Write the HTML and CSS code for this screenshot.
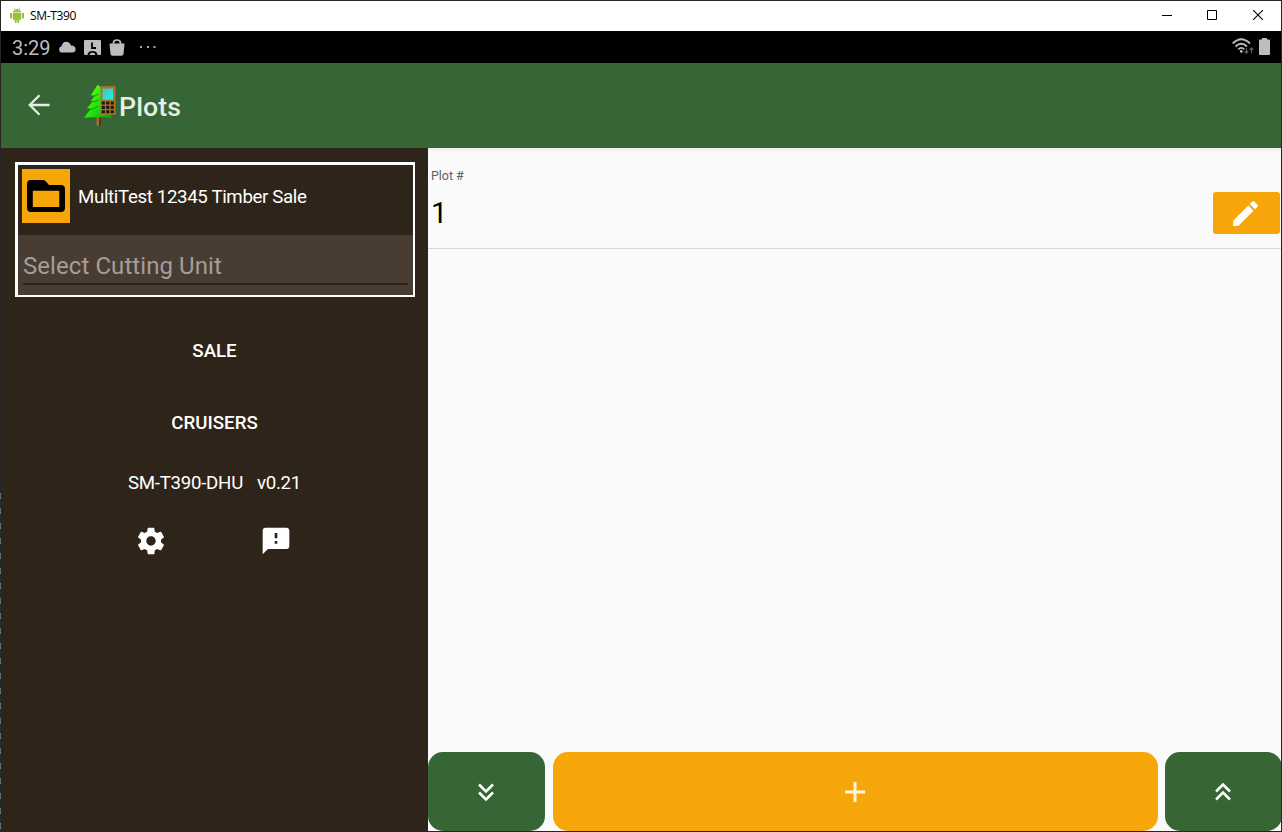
FILE: index.html
```html
<!DOCTYPE html>
<html lang="en">
<head>
<meta charset="utf-8">
<title>SM-T390</title>
<link rel="stylesheet" href="styles.css">
</head>
<body>
<div class="window">
  <header class="titlebar">
    <svg class="android" width="14" height="16" viewBox="0 0 14 16" fill="#97c03d"><path d="M3 5.2C3 1 11 1 11 5.2z"/><path d="M4 .5 5 2.3M10 .5 9 2.3" stroke="#97c03d" stroke-width=".7"/><path d="M3 5.8h8v6.4q0 .8-.8.8H9.300v2q0 1-1 1t-1-1v-2h-.6v2q0 1-1 1t-1-1v-2H3.800q-.8 0-.8-.8z"/><rect y="5.700" width="2.300" height="6" rx="1.100"/><rect x="11.700" y="5.700" width="2.300" height="6" rx="1.100"/><circle cx="5.300" cy="3.700" r=".45" fill="#fff"/><circle cx="8.700" cy="3.700" r=".45" fill="#fff"/></svg>
    <span class="title">SM-T390</span>
    <div class="controls">
      <svg width="10" height="10" viewBox="0 0 10 10"><path d="M0 5.500h10" stroke="#000"/></svg>
      <svg width="10" height="10" viewBox="0 0 10 10"><path d="M.5.500h9v9h-9z" fill="none" stroke="#000"/></svg>
      <svg width="10" height="10" viewBox="0 0 10 10"><path d="M0 0l10 10M10 0L0 10" stroke="#000" stroke-width="1.100"/></svg>
    </div>
  </header>
  <div class="status">
    <span class="clock">3:29</span>
    <svg class="cloud" width="18" height="12" viewBox="0 0 18 12"><path d="M3.500 11.500a3.200 3.200 0 0 1 0-6.200Q4.500 1 8 .8q3.500-.2 5 3.600 4.500.3 4.600 3.800-.1 3.300-3.600 3.300z" fill="#bdbdbd"/></svg>
    <svg class="badge" width="17" height="15" viewBox="0 0 17 15"><path d="M1 0h15q1 0 1 1v13q0 1-1 1h-2.500q-.3-4-5-4t-5 4H1q-1 0-1-1V1q0-1 1-1z" fill="#bdbdbd"/><path d="M8 2.500v5.500h4" fill="none" stroke="#000" stroke-width="1.800"/><path d="M5.500 15q.5-2.500 3-2.500t3 2.500z" fill="#bdbdbd"/></svg>
    <svg class="bag" width="16" height="17" viewBox="0 0 16 17"><path d="M.5 4.500h15L14.500 15q-.2 1.700-2 1.700h-9q-1.800 0-2-1.700z" fill="#bdbdbd"/><path d="M4.500 5V4q0-3 3.500-3t3.500 3v1" fill="none" stroke="#bdbdbd" stroke-width="1.700"/></svg>
    <svg class="dots" width="16" height="2" viewBox="0 0 16 2" fill="#a8a8a8"><path d="M0 0h2v2H0zM7 0h2v2H7zM13.500 0h2v2h-2z"/></svg>
    <svg class="wifi" width="22" height="17" viewBox="0 0 22 17"><g fill="none" stroke="#bdbdbd" stroke-width="1.800"><path d="M.7 5.500Q9.300-3 18 5.500M3.500 8.500Q9.300 3 15 8.500M6.300 11.300Q9.300 8.500 12.300 11.300"/></g><circle cx="9.300" cy="13.400" r="1.400" fill="#bdbdbd"/><path d="M14.500 10v5m-1.800-1.800 1.800 2 1.800-2M19.500 15v-5m-1.800 1.800 1.800-2 1.800 2" fill="none" stroke="#666" stroke-width="1.100"/></svg>
    <svg class="battery" width="11" height="17" viewBox="0 0 11 17"><path d="M3 0h5v1.500h2q1 0 1 1V16q0 1-1 1H1q-1 0-1-1V2.500q0-1 1-1h2z" fill="#bdbdbd"/></svg>
  </div>
  <div class="appbar">
    <svg class="back" width="22" height="22" viewBox="0 0 22 22"><path d="M21.500 11H2M11.500 1.200 1.700 11l9.800 9.800" fill="none" stroke="#e6eee6" stroke-width="2.300"/></svg>
    <svg class="logo" width="32" height="44" viewBox="0 0 33 44"><defs><linearGradient id="tree" x1="0" y1="0" x2="1" y2="1"><stop offset="0" stop-color="#75fb28"/><stop offset=".55" stop-color="#22e509"/><stop offset="1" stop-color="#119817"/></linearGradient><linearGradient id="screen" x1="0" y1="0" x2="1" y2="1"><stop offset="0" stop-color="#55b9bb"/><stop offset="1" stop-color="#15f5e8"/></linearGradient></defs><path d="M13 31h4.500v11.500L15 43l-2-1z" fill="#a87028"/><path d="M15.500 31h2v11.500h-2z" fill="#4e3717"/><path d="M14 0l4 3 11 30.500-3.500 1-4-1.500-6 .8-5.500-.3L0 34l7-9-4-.7 6-7-2-.5 4-5-4-.8z" fill="url(#tree)"/><path d="M3 24.800l5 .5 7-3M7 17.300l4 .2 4-2M7 11.500l4 .2 4-2" stroke="#159c12" stroke-width="1.100" fill="none"/><path d="M17 1.500h15.500V31H17z" fill="#a87428"/><path d="M19 4h11v11.500H19z" fill="url(#screen)"/><path d="M18.300 17.300h3.200v3.200h-3.200zm4.600 0h3.200v3.200h-3.200zm4.600 0h3.200v3.200h-3.200zm-9.200 4.500h3.200V25h-3.200zm4.600 0h3.200V25h-3.200zm4.600 0h3.200V25h-3.200zm-9.200 4.500h3.200v3.200h-3.200zm4.600 0h3.200v3.200h-3.200zm4.600 0h3.200v3.200h-3.200z" fill="#20170c"/></svg>
    <h1 class="heading">Plots</h1>
  </div>
  <main class="content">
    <aside class="sidebar">
      <section class="cruise">
        <div class="sale">
          <span class="folder"><svg width="38" height="32" viewBox="0 0 38 32"><path fill-rule="evenodd" d="M3.500 0H16q1.500 0 2.500 1l3.500 4h12q4 0 4 4v19q0 4-4 4H4q-4 0-4-4V4q0-4 3.500-4zM5.800 10.800V27h26.500V10.800z"/></svg></span>
          <span class="sale-name">MultiTest 12345 Timber Sale</span>
        </div>
        <div class="unit"><div class="picker">Select Cutting Unit</div></div>
      </section>
      <nav class="menu">
        <a class="item">SALE</a>
        <a class="item">CRUISERS</a>
      </nav>
      <div class="device"><span class="device-name">SM-T390-DHU</span><span class="version">v0.21</span></div>
      <div class="tools">
        <svg width="32" height="32" viewBox="0 0 24 24" fill="#fff"><path d="M19.430 12.980c.04-.32.070-.64.070-.98s-.03-.66-.07-.98l2.110-1.650c.19-.15.240-.42.120-.64l-2-3.460c-.12-.22-.39-.3-.61-.22l-2.490 1c-.52-.4-1.080-.73-1.690-.98l-.38-2.650C14.460 2.180 14.250 2 14 2h-4c-.25 0-.46.180-.49.420l-.38 2.650c-.61.250-1.170.59-1.690.98l-2.490-1c-.23-.09-.49 0-.61.220l-2 3.460c-.13.220-.07.490.120.640l2.110 1.650c-.04.320-.07.650-.07.980s.03.660.070.980l-2.110 1.650c-.19.150-.24.420-.12.640l2 3.460c.12.220.39.300.61.220l2.490-1c.52.400 1.080.730 1.690.980l.38 2.650c.03.240.240.420.490.420h4c.25 0 .46-.18.490-.42l.38-2.650c.61-.25 1.170-.59 1.690-.98l2.490 1c.23.090.49 0 .61-.22l2-3.460c.12-.22.070-.49-.12-.64zM12 15.500c-1.930 0-3.500-1.570-3.500-3.500s1.570-3.500 3.500-3.500 3.500 1.570 3.500 3.500-1.570 3.500-3.500 3.500z"/></svg>
        <svg width="32" height="32" viewBox="0 0 24 24" fill="#fff"><path d="M20 2H4c-1.100 0-1.990.9-1.990 2L2 22l4-4h14c1.100 0 2-.9 2-2V4c0-1.100-.9-2-2-2zm-7 12h-2v-2h2zm0-4h-2V6h2z"/></svg>
      </div>
    </aside>
    <section class="plots">
      <div class="row">
        <div class="plot"><span class="label">Plot #</span><span class="number">1</span></div>
        <button class="edit"><svg width="33" height="33" viewBox="0 0 24 24" fill="#fff"><path d="M3 17.250V21h3.750L17.810 9.940l-3.750-3.750zM20.710 7.040a1 1 0 0 0 0-1.410l-2.340-2.340a1 1 0 0 0-1.410 0l-1.830 1.830 3.750 3.750z"/></svg></button>
      </div>
      <div class="actions">
        <button class="jump"><svg width="16" height="18" viewBox="0 0 16 18"><path d="M1 1.500l7 7 7-7M1 9.500l7 7 7-7" fill="none" stroke="#fff" stroke-width="2.500"/></svg></button>
        <button class="add"><svg width="20" height="20" viewBox="0 0 20 20"><path d="M0 10h20M10 0v20" stroke="#fff6dc" stroke-width="3"/></svg></button>
        <button class="jump"><svg width="16" height="18" viewBox="0 0 16 18"><path d="M1 8.500l7-7 7 7M1 16.500l7-7 7 7" fill="none" stroke="#fff" stroke-width="2.500"/></svg></button>
      </div>
    </section>
  </main>
</div>
</body>
</html>
```
FILE: styles.css
```css
* { box-sizing: border-box; }
body { margin: 0; font-family: Roboto, sans-serif; }
svg { display: block; flex: none; }
button { border: 0; padding: 0; display: flex; align-items: center; justify-content: center; }
.window { position: relative; width: 1282px; height: 832px; border: 1px solid #252525; display: flex; flex-direction: column; background: #fafafa; }
/* dashed marks along the lower part of the window's left border */
.window::before { content: ""; position: absolute; left: -1px; top: 492px; width: 1px; height: 338px; background: repeating-linear-gradient(#77776a 0 1px, #4c6a85 1px 4px, #77776a 4px 6px, #252a2c 6px 15px); }
.titlebar { height: 30px; flex: none; background: #fff; display: flex; align-items: center; padding-left: 9px; }
.android { margin-top: -3px; }
.title { margin-left: 6px; font: 12px/16px "Open Sans", sans-serif; letter-spacing: -0.35px; color: #000; }
.controls { margin-left: auto; display: flex; gap: 36px; padding: 0 18px 2px 0; }
.controls svg:first-child { margin-right: -1px; }
.status { height: 32px; flex: none; background: #000; display: flex; align-items: center; padding: 0 11px; }
.clock { color: #bdbdbd; font-size: 20px; width: 46px; padding-top: 2px; }
.badge { margin: 1px 0 0 8px; }
.bag { margin: 1px 0 0 8px; }
.dots { margin-left: 15px; }
.wifi { margin: -1px 0 0 auto; }
.battery { margin: -2px 0 0 5px; }
.appbar { height: 85px; flex: none; background: #366635; display: flex; align-items: center; padding-left: 27px; }
.back { margin-top: -2px; }
.logo { margin-left: 34px; margin-top: 1px; }
.heading { margin: 2px 0 0 3px; color: #e6eee6; font-size: 26.7px; font-weight: 500; letter-spacing: 0.1px; }
.content { flex: 1; min-height: 0; display: flex; overflow: hidden; }
.sidebar { width: 427px; flex: none; background: #2f2419; color: #fff; padding: 14px 13px 0 14px; }
.cruise { height: 135px; border: 2px solid #fff; border-width: 3px 2px 2px 3px; display: flex; flex-direction: column; }
.sale { height: 70px; padding: 4px 0 0 4px; display: flex; gap: 8px; }
.folder { width: 48px; height: 54px; background: #f7a60a; display: flex; align-items: center; justify-content: center; }
.sale-name { line-height: 56px; font-size: 18.7px; white-space: nowrap; letter-spacing: -0.36px; }
.unit { flex: 1; background: #493d33; padding: 0 5px; }
.picker { height: 50px; border-bottom: 2px solid #2f2419; color: #a49e99; font-size: 24px; line-height: 63px; letter-spacing: 0.07px; }
.menu { padding: 18px 1px 0 0; display: flex; flex-direction: column; }
.item { height: 72px; line-height: 72px; text-align: center; font-size: 18.7px; font-weight: 500; }
.device { display: flex; justify-content: center; gap: 14px; font-size: 18.7px; line-height: 24px; padding: 12px 1px 0 0; letter-spacing: -0.28px; }
.tools { display: flex; justify-content: space-between; align-items: center; margin: 30px 123px 0 120px; }
.plots { flex: 1; min-width: 0; display: flex; flex-direction: column; justify-content: space-between; background: linear-gradient(#ededed, #fafafa 4px); }
.row { height: 101px; border-bottom: 1px solid #d9d9d9; display: flex; justify-content: space-between; padding: 0 1px 0 3px; }
.plot { display: flex; flex-direction: column; padding-top: 20px; }
.label { font-size: 12.5px; line-height: 16px; color: #606060; letter-spacing: -0.05px; }
.number { font-size: 29.3px; line-height: 34px; margin-top: 12px; color: #000; }
.edit { width: 67px; height: 42px; margin-top: 44px; border-radius: 3px; background: #f7a60a; }
.edit svg { margin-right: 2px; }
.actions { height: 79px; display: flex; }
.jump { width: 117px; flex: none; border-radius: 15px; background: #366635; }
.jump svg, .add svg { margin-right: 2px; }
.add { width: 605px; flex: none; margin: 0 7px 0 8px; border-radius: 15px; background: #f7a60a; }
```
